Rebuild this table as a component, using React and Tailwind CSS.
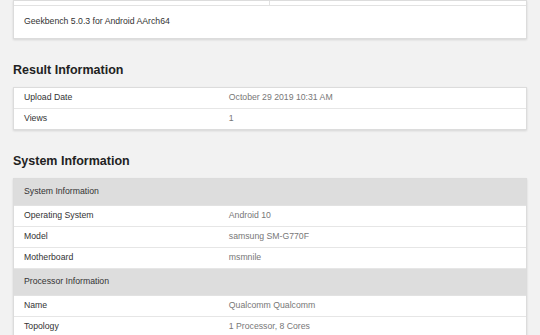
const result = [
  ["Upload Date", "October 29 2019 10:31 AM"],
  ["Views", "1"],
];

const system = [
  { header: "System Information" },
  ["Operating System", "Android 10"],
  ["Model", "samsung SM-G770F"],
  ["Motherboard", "msmnile"],
  { header: "Processor Information" },
  ["Name", "Qualcomm Qualcomm"],
  ["Topology", "1 Processor, 8 Cores"],
];

const Card = ({ children }) => (
  <div className="mx-[13px] border border-[#dcdcdc] bg-white shadow-[0_1px_2px_rgba(0,0,0,0.12)]">
    {children}
  </div>
);

const Heading = ({ children }) => (
  <h2 className="mx-[13px] mt-[22px] mb-[8px] h-[18px] text-[12.5px] leading-[18px] font-bold text-[#222]">
    {children}
  </h2>
);

function Rows({ rows }) {
  return rows.map((r, i) => {
    const last = i === rows.length - 1;
    if (r.header) {
      return (
        <div key={i} className="flex h-[27px] items-center border-b border-[#e2e2e2] bg-[#dddddd] px-[10px] text-[#333]">
          {r.header}
        </div>
      );
    }
    return (
      <div key={i} className={`flex items-center ${last ? "h-[20px]" : "h-[21px] border-b border-[#e6e6e6]"}`}>
        <div className="w-2/5 px-[10px] text-[#333]">{r[0]}</div>
        <div className="w-3/5 px-[10px] text-[#777]">{r[1]}</div>
      </div>
    );
  });
}

export default function App() {
  return (
    <div className="h-[335px] overflow-hidden bg-[#f2f2f2] font-['Liberation_Sans',Arial,sans-serif] text-[8.7px]">
      <Card>
        <div className="flex h-[5px] border-b border-[#e2e2e2]">
          <div className="w-1/2 border-r border-[#e2e2e2]" />
          <div className="w-1/2" />
        </div>
        <div className="flex h-[32px] items-center px-[10px] text-[#333]">
          Geekbench 5.0.3 for Android AArch64
        </div>
      </Card>

      <Heading>Result Information</Heading>
      <Card>
        <Rows rows={result} />
      </Card>

      <Heading>System Information</Heading>
      <Card>
        <Rows rows={system} />
      </Card>
    </div>
  );
}
